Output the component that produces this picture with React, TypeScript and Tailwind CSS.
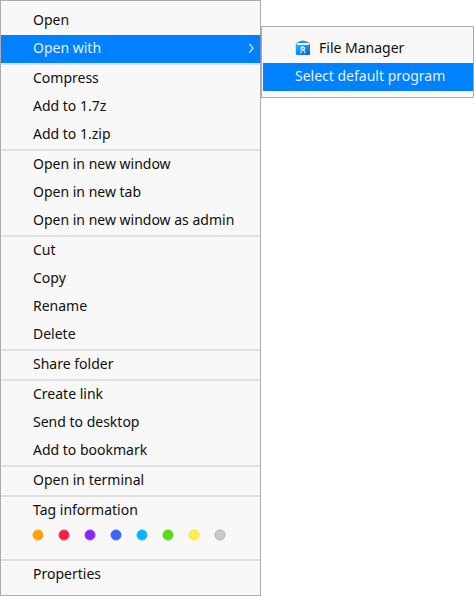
import React from "react";

type Entry = { label: string; active?: boolean; submenu?: boolean };

const groups: Entry[][] = [
  [{ label: "Open" }, { label: "Open with", active: true, submenu: true }],
  [{ label: "Compress" }, { label: "Add to 1.7z" }, { label: "Add to 1.zip" }],
  [
    { label: "Open in new window" },
    { label: "Open in new tab" },
    { label: "Open in new window as admin" },
  ],
  [{ label: "Cut" }, { label: "Copy" }, { label: "Rename" }, { label: "Delete" }],
  [{ label: "Share folder" }],
  [{ label: "Create link" }, { label: "Send to desktop" }, { label: "Add to bookmark" }],
  [{ label: "Open in terminal" }],
];

const tags = [
  { fill: "#ffa503", stroke: "#f9a526" },
  { fill: "#ff1c49", stroke: "#f63a5f" },
  { fill: "#9023fc", stroke: "#8f3cee" },
  { fill: "#3468ff", stroke: "#3f6cee" },
  { fill: "#00b5ff", stroke: "#22b4f2" },
  { fill: "#58df0a", stroke: "#60d420" },
  { fill: "#fef144", stroke: "#f2e440" },
  { fill: "#cccccc", stroke: "#b0b0b0" },
];

function Separator() {
  return <div className="h-[2px] shrink-0 bg-[#e0e0e0]" />;
}

function MenuRow({ label, active, submenu }: Entry) {
  return (
    <div
      className={`flex h-7 shrink-0 items-center justify-between pb-[2px] pl-8 pr-[5px] ${
        active ? "bg-[#0081ff] text-[#e6f2ff]" : ""
      } ${submenu ? "-mr-px border-r border-[#738fb5]" : ""}`}
    >
      <span className="whitespace-nowrap">{label}</span>
      {submenu && (
        <svg width="7" height="10" viewBox="0 0 7 10" fill="none" stroke="#e6f2ff" strokeWidth="1.2">
          <path d="M1.3 0.8 L5 5.2 L1.3 9.6" />
        </svg>
      )}
    </div>
  );
}

function FileManagerIcon() {
  return (
    <svg width="16" height="16" viewBox="0 0 16 16">
      <defs>
        <linearGradient id="folder" x1="0" y1="0" x2="1" y2="1">
          <stop offset="0" stopColor="#21b5ff" />
          <stop offset="1" stopColor="#075dee" />
        </linearGradient>
      </defs>
      <path d="M0.8 4 L3 2 Q8 -1.2 13 2 L15 4 V6 H0.8 Z" fill="#149cf0" />
      <path d="M9.5 1.6 L13 2.3 L14.6 4 H9.5 Z" fill="#8a6fae" />
      <path d="M1.8 3 H14 V5.3 H1.8 Z" fill="#e9f3fb" />
      <path d="M0.8 5 H15 V14 Q15 15 14 15 H1.8 Q0.8 15 0.8 14 Z" fill="url(#folder)" />
      <circle cx="7.8" cy="8.6" r="1.8" fill="#5fb0ff" stroke="#e4f4ff" strokeWidth="1.2" />
      <path d="M6.2 10.7 L5.5 13.4 M9.2 10.7 L9.9 13.4" stroke="#d5ecff" strokeWidth="1.1" />
    </svg>
  );
}

export default function App() {
  return (
    <div className="flex h-[596px] w-[474px] items-start overflow-hidden bg-white font-['Noto_Sans',sans-serif] text-[14px] leading-[26px] text-[#0f0f0f]">
      <div className="flex h-[596px] w-[261px] shrink-0 flex-col border border-[#acacac] bg-[#f8f8f8] pt-[6px]">
        {groups.map((group, i) => (
          <React.Fragment key={i}>
            {group.map((entry) => (
              <MenuRow key={entry.label} {...entry} />
            ))}
            <Separator />
          </React.Fragment>
        ))}
        <MenuRow label="Tag information" />
        <div className="flex h-[34px] shrink-0 gap-[14px] pl-[31px] pt-1">
          {tags.map((tag) => (
            <svg key={tag.fill} width="12" height="12" viewBox="0 0 12 12">
              <circle cx="6" cy="6" r="5" fill={tag.fill} stroke={tag.stroke} />
            </svg>
          ))}
        </div>
        <Separator />
        <MenuRow label="Properties" />
      </div>
      <div className="mt-[26px] flex h-[72px] w-[213px] shrink-0 flex-col border border-[#acacac] bg-[#f8f8f8] pl-px pt-2">
        <div className="flex h-7 shrink-0 items-center gap-2 pb-[2px] pl-8">
          <FileManagerIcon />
          <span className="whitespace-nowrap">File Manager</span>
        </div>
        <MenuRow label="Select default program" active />
      </div>
    </div>
  );
}
